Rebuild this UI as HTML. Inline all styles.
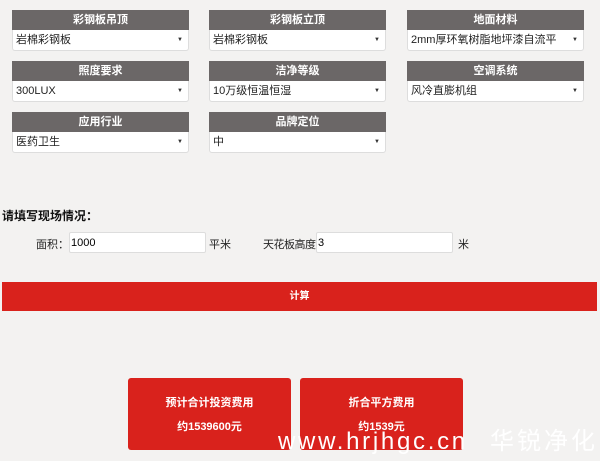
<!DOCTYPE html><html><head><meta charset="utf-8"><style>
body{margin:0;width:600px;height:461px;background:#f3f2f1;font-family:"Liberation Sans","Noto Sans CJK SC",sans-serif;position:relative;overflow:hidden}
.c{position:absolute;width:177px}
.h{height:20px;background:#6b6767;color:#fff;font-size:11px;font-weight:bold;text-align:center;line-height:20px}
.s{height:21px;background:#fff;border:1px solid #ddd;border-top:none;box-sizing:border-box;font-size:11px;line-height:20px;padding-left:3px;color:#222;position:relative;border-radius:0 0 3px 3px}
.s:after{content:"▼";position:absolute;right:5px;top:0;font-size:6px;color:#333}
.a{position:absolute;font-size:11px;color:#222}
.in{position:absolute;height:21px;background:#fff;border:1px solid #ddd;box-sizing:border-box;border-radius:2px;font-size:11px;line-height:20px;padding-left:1px}
.card{position:absolute;top:378px;width:163px;height:72px;background:#d9221c;border-radius:3px;color:#fff;font-weight:bold;font-size:11px;text-align:center;line-height:14px}
.w{position:absolute;top:428px;color:#fff;font-size:24px;white-space:nowrap;line-height:28px}
</style></head><body>
<div class="c" style="left:12px;top:10px"><div class="h">彩钢板吊顶</div><div class="s">岩棉彩钢板</div></div>
<div class="c" style="left:209px;top:10px"><div class="h">彩钢板立顶</div><div class="s">岩棉彩钢板</div></div>
<div class="c" style="left:407px;top:10px"><div class="h">地面材料</div><div class="s">2mm厚环氧树脂地坪漆自流平</div></div>
<div class="c" style="left:12px;top:61px"><div class="h">照度要求</div><div class="s">300LUX</div></div>
<div class="c" style="left:209px;top:61px"><div class="h">洁净等级</div><div class="s">10万级恒温恒湿</div></div>
<div class="c" style="left:407px;top:61px"><div class="h">空调系统</div><div class="s">风冷直膨机组</div></div>
<div class="c" style="left:12px;top:112px"><div class="h">应用行业</div><div class="s">医药卫生</div></div>
<div class="c" style="left:209px;top:112px"><div class="h">品牌定位</div><div class="s">中</div></div>
<div class="a" style="left:2px;top:207px;font-size:12px;font-weight:bold;color:#111">请填写现场情况：</div>
<div class="a" style="left:36px;top:236px">面积：</div>
<div class="in" style="left:69px;top:232px;width:137px">1000</div>
<div class="a" style="left:209px;top:236px">平米</div>
<div class="a" style="left:263px;top:236px;letter-spacing:-0.5px">天花板高度:</div>
<div class="in" style="left:316px;top:232px;width:137px">3</div>
<div class="a" style="left:458px;top:236px">米</div>
<div style="position:absolute;left:2px;top:282px;width:595px;height:29px;background:#d9221c;color:#fff;font-size:10px;font-weight:bold;text-align:center;line-height:29px">计算</div>
<div class="card" style="left:128px"><div style="margin-top:18px">预计合计投资费用</div><div style="margin-top:10px">约1539600元</div></div>
<div class="card" style="left:300px"><div style="margin-top:18px">折合平方费用</div><div style="margin-top:10px">约1539元</div></div>
<div class="w" style="left:278px;letter-spacing:2.7px">www.hrjhgc.cn</div>
<div class="w" style="left:490px;letter-spacing:3px">华锐净化</div>
</body></html>
